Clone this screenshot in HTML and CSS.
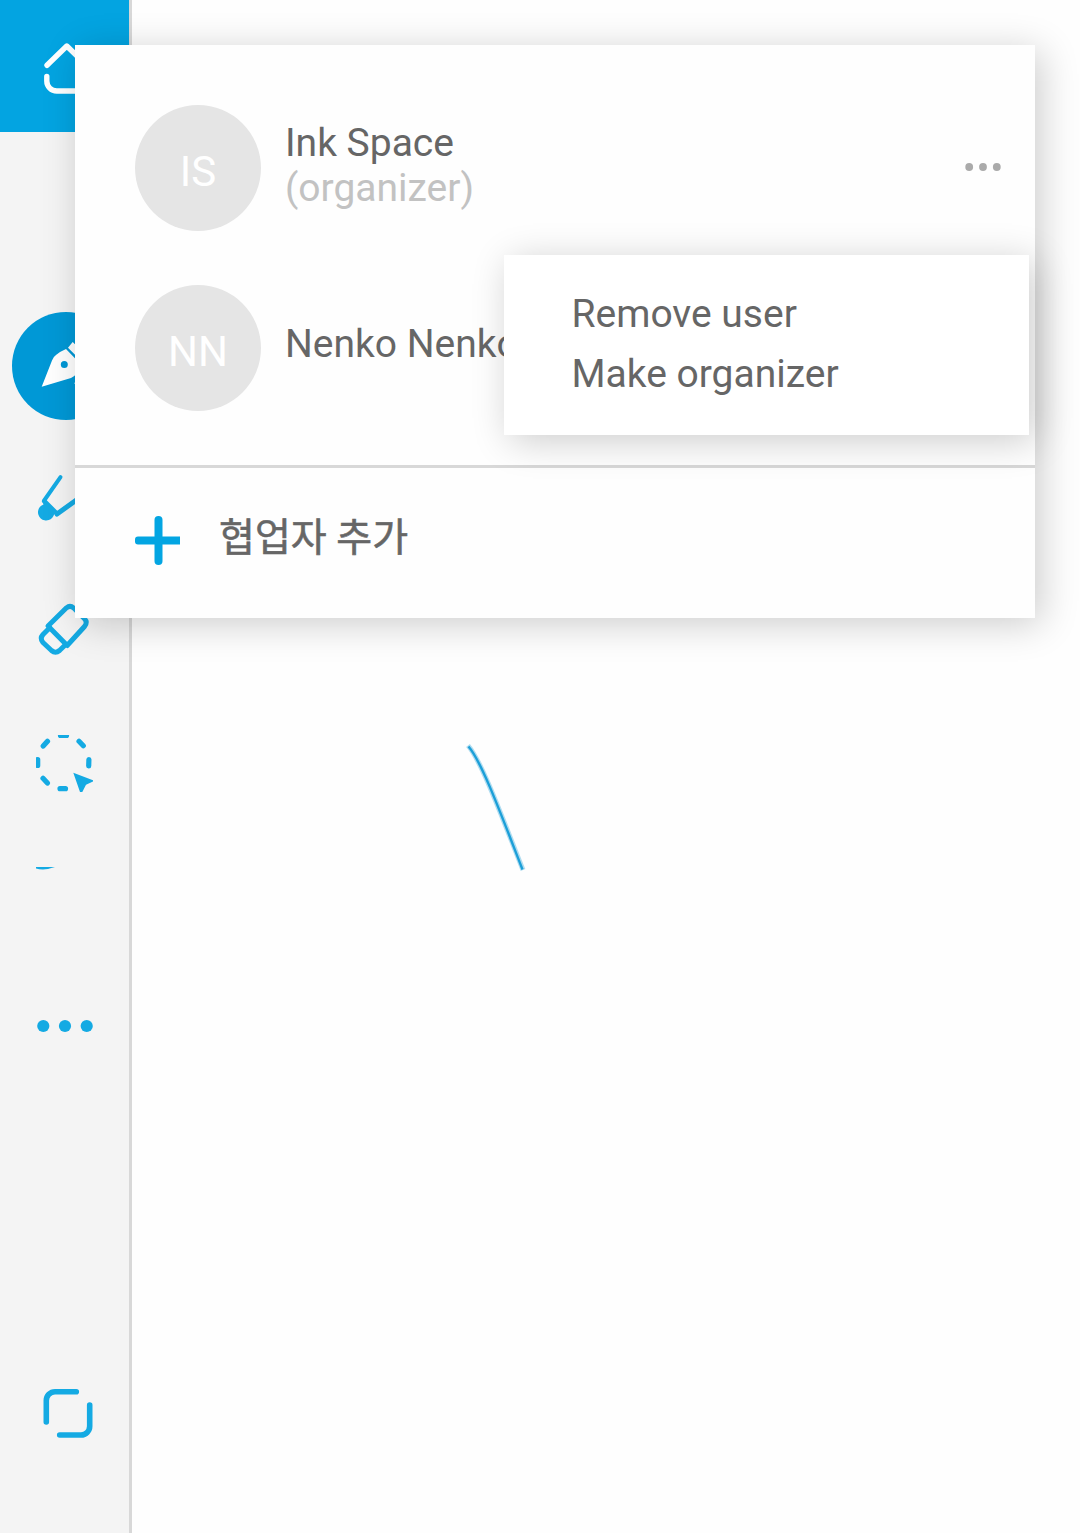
FILE: index.html
```html
<!DOCTYPE html>
<html lang="ko">
<head>
<meta charset="utf-8">
<title>Ink Space</title>
<link rel="stylesheet" href="styles.css">
</head>
<body>
<div class="app">
  <nav class="sidebar">
    <div class="tool home">
      <svg width="129" height="132" viewBox="0 0 129 132" class="line-icon">
        <path d="M47 65.300 66.800 46 86.600 65.300M46.800 76.500V81A10 10 0 0 0 56.800 91H77A10 10 0 0 0 87 81V76.500"/>
      </svg>
    </div>
    <div class="tool">
      <svg width="129" height="132" viewBox="0 0 129 132">
        <circle class="pen-disc" cx="66" cy="66" r="54"/>
        <path class="pen-nib" fill-rule="evenodd" d="M41.700 86.700 52 60.500Q53 57 56 55Q60 51.500 66 49L81 64.500Q78 75 71 78ZM67.800 64.500A3.500 3.500 0 1 0 60.800 64.500A3.500 3.500 0 1 0 67.800 64.500ZM68 47.700 72.700 42 88 57 82.500 62.300ZM74 83.500 77 80V83.500Z"/>
      </svg>
    </div>
    <div class="tool">
      <svg width="129" height="132" viewBox="0 0 129 132" class="line-icon marker">
        <path d="M60.500 45.200 43.800 69"/>
        <path class="wide" d="M57 82 82 64"/>
        <path class="solid" d="M42 69 46 67.500 59 80.500 56 84 54.200 82A8.200 8.200 0 1 1 43.500 72.500Z"/>
      </svg>
    </div>
    <div class="tool">
      <svg width="129" height="132" viewBox="0 0 129 132" class="line-icon eraser">
        <path d="M48 62 66.500 43.800Q70 40.800 73.500 43.800L84.500 54.800Q88 58.500 84.500 62.500L67.200 81.500ZM50 63.500 43 70.500Q39.500 74.500 43 78.500L51.500 86.500Q55.500 90 59.500 86.500L65.700 80.500"/>
      </svg>
    </div>
    <div class="tool clipped">
      <svg width="57" height="57" viewBox="36 39 57 57" class="line-icon lasso">
        <path d="M60.500 39.500H66.500M79 45.300 83.300 49.700M88.900 63.500 88.700 70M60 92.700 65.500 92.600M43 82.300 47.400 87M37.700 63.500V69.500M43.200 50 47.500 45.300"/>
        <path class="solid" d="M73.300 76.700 93 84.200V85.500L86 88.700 82.300 96H80Z"/>
      </svg>
    </div>
    <div class="tool clipped">
      <svg width="57" height="57" viewBox="0 0 57 57">
        <path class="accent" d="M0 0H19Q11 2.500 7 2.500 3 2.500 0 1.500Z"/>
      </svg>
    </div>
    <div class="tool">
      <svg width="129" height="132" viewBox="0 0 129 132" class="accent">
        <circle cx="43.300" cy="66" r="6.100"/><circle cx="65" cy="66" r="6.100"/><circle cx="86.700" cy="66" r="6.100"/>
      </svg>
    </div>
    <div class="tool fullscreen">
      <svg width="129" height="132" viewBox="0 0 129 132" class="line-icon thick">
        <path d="M76.300 44.700H55A8.700 8.700 0 0 0 46.300 53.400V75M89.700 58V79.300A8.700 8.700 0 0 1 81 88H59.700"/>
      </svg>
    </div>
  </nav>

  <main class="canvas">
    <svg class="drawing" width="948" height="1533" viewBox="132 0 948 1533">
      <path class="ink-halo" d="M468 745.500C482 762 502 817 523 870"/>
      <path class="ink" d="M468.500 746.500C482 762 502 817 522.500 869.500"/>
    </svg>
  </main>

  <section class="panel">
    <ul class="users">
      <li class="user">
        <span class="avatar">IS</span>
        <div class="who"><span>Ink Space</span><span class="role">(organizer)</span></div>
        <svg class="more" width="36" height="8" viewBox="0 0 36 8">
          <circle cx="4.200" cy="4" r="3.900"/><circle cx="18" cy="4" r="3.900"/><circle cx="31.800" cy="4" r="3.900"/>
        </svg>
      </li>
      <li class="user">
        <span class="avatar">NN</span>
        <div class="who single"><span>Nenko Nenkov</span></div>
      </li>
    </ul>
    <div class="add">
      <svg width="45" height="50" viewBox="0 0 45 50">
        <path class="bar" d="M3 21.500H45V29.500H3Q0 29.500 0 26.500V24.500Q0 21.500 3 21.500Z"/>
        <path class="stem" d="M23.500 5V46"/>
      </svg>
      <span class="add-label">협업자 추가</span>
    </div>
    <div class="menu">
      <span>Remove user</span>
      <span>Make organizer</span>
    </div>
  </section>
</div>
</body>
</html>
```
FILE: styles.css
```css
* { box-sizing: border-box; }
body {
  margin: 0;
  background: #fefefe;
  font-family: Roboto, "Noto Sans CJK KR", sans-serif;
  font-size: 39px;
  color: #666;
}
svg { display: block; flex: none; }
.app {
  position: relative;
  display: flex;
  width: 1080px;
  height: 1533px;
  overflow: hidden;
}
.sidebar {
  display: flex;
  flex-direction: column;
  width: 132px;
  background: #f4f4f4;
  border-right: 3px solid #d8d8d8;
}
.tool {
  display: flex;
  flex: none;
  align-items: center;
  justify-content: center;
  height: 132px;
}
.home { background: #03a4e1; margin-bottom: 168px; }
.clipped { padding-top: 3px; }
.fullscreen { margin-top: auto; margin-bottom: 54px; }
.line-icon {
  fill: none;
  stroke: #14aae3;
  stroke-width: 5;
  stroke-linecap: round;
  stroke-linejoin: round;
}
.home .line-icon { stroke: #fff; stroke-width: 5.4; }
.marker { stroke-width: 4; }
.marker .wide { stroke-width: 5; }
.lasso { stroke-width: 5.2; }
.thick { stroke-width: 5.6; }
.line-icon .solid { fill: #14aae3; stroke: none; }
.accent { fill: #14aae3; }
.pen-disc { fill: #0098d6; }
.pen-nib { fill: #fff; }
.canvas { flex: 1; }
.ink, .ink-halo { fill: none; stroke: #1c9fd8; stroke-width: 2.4; }
.ink-halo { stroke-width: 5; opacity: .35; }

.panel {
  position: absolute;
  left: 75px;
  top: 45px;
  width: 960px;
  height: 573px;
  background: #fefefe;
  box-shadow: 6px 6px 36px rgba(0, 0, 0, .2);
}
.users {
  display: flex;
  flex-direction: column;
  gap: 54px;
  margin: 0;
  padding: 60px 34px 54px 60px;
  height: 423px;
  list-style: none;
  border-bottom: 3px solid #d8d8d8;
}
.user { display: flex; align-items: center; height: 126px; flex: none; }
.avatar {
  flex: none;
  width: 126px;
  height: 126px;
  margin-right: 24px;
  padding-top: 4px;
  border-radius: 50%;
  background: #e5e5e5;
  color: #fff;
  font-size: 42px;
  line-height: 126px;
  text-align: center;
}
.who {
  display: flex;
  flex: 1;
  flex-direction: column;
  padding-bottom: 4px;
  line-height: 45px;
  white-space: nowrap;
}
.single { padding-bottom: 8px; }
.role { color: #c2c2c2; }
.more { fill: #aaa; margin-bottom: 3px; }
.add { display: flex; gap: 39px; padding: 47px 60px; line-height: 45px; }
.add-label { padding-top: 1px; -webkit-text-stroke: .6px #666; }
.bar { fill: #03a5e2; }
.stem { fill: none; stroke: #03a5e2; stroke-width: 8; stroke-linecap: round; }
.menu {
  position: absolute;
  left: 429px;
  top: 210px;
  display: flex;
  flex-direction: column;
  width: 525px;
  height: 180px;
  padding: 29px 67.5px;
  line-height: 60px;
  background: #fff;
  box-shadow: 6px 6px 36px rgba(0, 0, 0, .2);
}
```
